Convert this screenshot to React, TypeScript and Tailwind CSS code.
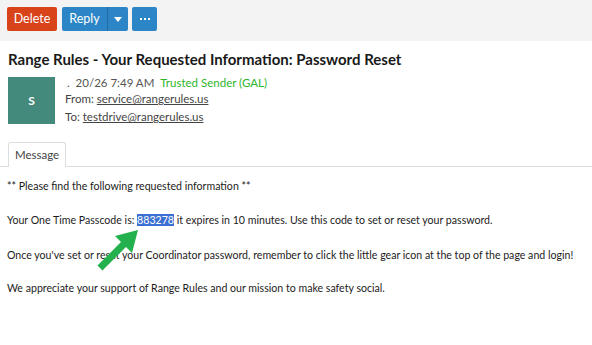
import React from 'react';

const body = { fontFamily: 'Lato, "Noto Sans", sans-serif' };

function Toolbar() {
  return (
    <div className="flex h-[41px] items-start gap-[5px] bg-[#f3f3f3] px-[7px] pt-[7px]" style={{ fontFamily: 'Lato, sans-serif' }}>
      <button className="h-[24px] w-[50px] rounded-[2px] bg-[#d8431a] text-[12.5px] text-white">Delete</button>
      <div className="flex h-[24px] overflow-hidden rounded-[2px] bg-[#2c85c6] text-white">
        <span className="flex w-[45px] items-center justify-center text-[12.5px]">Reply</span>
        <span className="flex w-[21px] items-center justify-center border-l border-[#226aa0]">
          <svg width="8" height="5" viewBox="0 0 8 5"><path d="M0 0h8L4 5z" fill="#fff" /></svg>
        </span>
      </div>
      <button className="ml-[-1px] flex h-[24px] w-[25px] items-center justify-center gap-[2px] rounded-[2px] bg-[#2c85c6]">
        <span className="h-[2px] w-[2px] bg-white" />
        <span className="h-[2px] w-[2px] bg-white" />
        <span className="h-[2px] w-[2px] bg-white" />
      </button>
    </div>
  );
}

export default function App() {
  return (
    <div className="relative h-[345px] w-[592px] overflow-hidden bg-white text-[#222]">
      <Toolbar />
      <h1 className="ml-[8px] mt-[8px] text-[15px] font-bold leading-[20px] text-[#1a1a1a]" style={{ fontFamily: 'Lato, sans-serif' }}>
        Range Rules - Your Requested Information: Password Reset
      </h1>
      <div className="mt-[8px] flex gap-[10px] pl-[8px]" style={body}>
        <div className="flex h-[47px] w-[47px] items-center justify-center bg-[#438a7c] text-[12px] font-bold text-white">S</div>
        <div className="-mt-[2px] text-[11.5px] leading-[15px] text-[#444]">
          <div>
            <span className="ml-[2px] text-[#555]">.&nbsp; 20/26 7:49 AM</span>
            <span className="ml-[6px] text-[#2db52d]">Trusted Sender (GAL)</span>
          </div>
          <div className="mt-[1px]">From: <span className="underline">service@rangerules.us</span></div>
          <div className="mt-[3px]">To: <span className="underline">testdrive@rangerules.us</span></div>
        </div>
      </div>
      <div className="mt-[18px] flex h-[25px] items-end border-b border-[#ddd]" style={body}>
        <div className="ml-[8px] flex h-[25px] w-[58px] items-center justify-center rounded-t-[3px] border border-b-0 border-[#ddd] bg-white text-[11.5px] text-[#444] -mb-px">
          Message
        </div>
      </div>
      <div className="px-[7px] pt-[11px] text-[10.6px] leading-[17px] text-[#1c1c1c]" style={body}>
        <p>** Please find the following requested information **</p>
        <p className="mt-[17px]">
          Your One Time Passcode is: <span className="bg-[#3b6fd1] text-white">883278</span> it expires in 10 minutes. Use this code to set or reset your password.
        </p>
        <p className="mt-[18px]">
          Once you've set or reset your Coordinator password, remember to click the little gear icon at the top of the page and login!
        </p>
        <p className="mt-[16px]">We appreciate your support of Range Rules and our mission to make safety social.</p>
      </div>
      <svg className="absolute left-[94px] top-[225px]" width="48" height="48" viewBox="0 0 48 48">
        <path d="M6 43 L31 18" stroke="#22b14c" strokeWidth="7" strokeLinecap="butt" />
        <path d="M44 5 L21 11 L38 28 Z" fill="#22b14c" />
      </svg>
    </div>
  );
}
